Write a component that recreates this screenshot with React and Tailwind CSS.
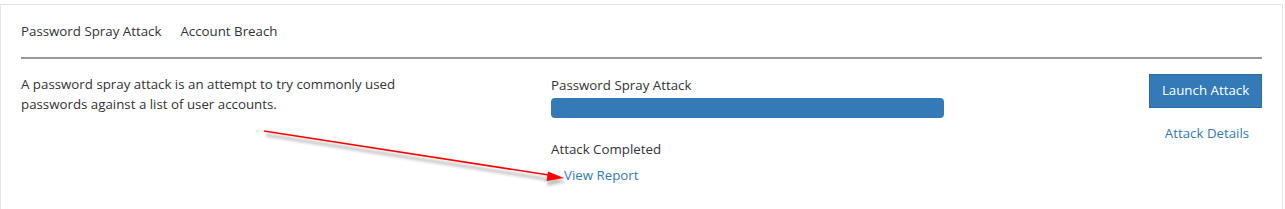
import { useState } from 'react'

const font = { fontFamily: '"Open Sans", "Noto Sans", Arial, sans-serif' }

function Arrow() {
  // red annotation arrow pointing at the report link
  return (
    <svg className="absolute left-0 top-0 pointer-events-none" width="1285" height="209">
      <defs>
        <filter id="sh" x="-10%" y="-50%" width="120%" height="300%">
          <feGaussianBlur stdDeviation="1.5" />
        </filter>
      </defs>
      <g opacity="0.35" filter="url(#sh)">
        <line x1="266" y1="135" x2="552" y2="180" stroke="#555" strokeWidth="3" />
        <polygon points="566,182 549,175 547,186" fill="#555" />
      </g>
      <line x1="264" y1="131" x2="552" y2="175.5" stroke="#f00" strokeWidth="1.6" />
      <polygon points="564,178 548,171.5 546.5,181" fill="#f00" />
    </svg>
  )
}

export default function App() {
  const [tab, setTab] = useState('spray')
  const tabs = [
    { id: 'spray', label: 'Password Spray Attack' },
    { id: 'breach', label: 'Account Breach' },
  ]

  return (
    <div className="relative w-[1285px] h-[209px] bg-white overflow-hidden text-[13.3px] text-[#333]" style={font}>
      <div className="mt-[4px] ml-0 w-[1283px] h-[205px] border-t border-l border-r border-[#e3e3e3] px-[20px]">
        <div className="flex gap-[19px] h-[52px] items-end pb-[17px]">
          {tabs.map(t => (
            <button key={t.id} onClick={() => setTab(t.id)} className="leading-[18px]">
              {t.label}
            </button>
          ))}
        </div>
        <div className="w-[1241px] border-t-2 border-[#999]" />

        <div className="grid grid-cols-[530px_1fr_113px] w-[1241px] pt-[15px]">
          <p className="leading-[20px] w-[410px]">
            A password spray attack is an attempt to try commonly used passwords against a list of user accounts.
          </p>

          <div className="pt-[1px]">
            <p className="leading-[20px]">Password Spray Attack</p>
            <div className="mt-[3px] w-[393px] h-[20px] rounded-[4px] bg-[#337ab7]" />
            <p className="mt-[21px] leading-[20px]">Attack Completed</p>
            <a href="#" className="block mt-[6px] ml-[13px] leading-[20px] text-[#337ab7]">View Report</a>
          </div>

          <div className="flex flex-col items-center">
            <button className="w-[113px] h-[34px] bg-[#337ab7] border border-[#2e6da4] text-white">
              Launch Attack
            </button>
            <a href="#" className="mt-[15px] ml-[3px] leading-[20px] text-[#337ab7]">Attack Details</a>
          </div>
        </div>
      </div>
      <Arrow />
    </div>
  )
}
